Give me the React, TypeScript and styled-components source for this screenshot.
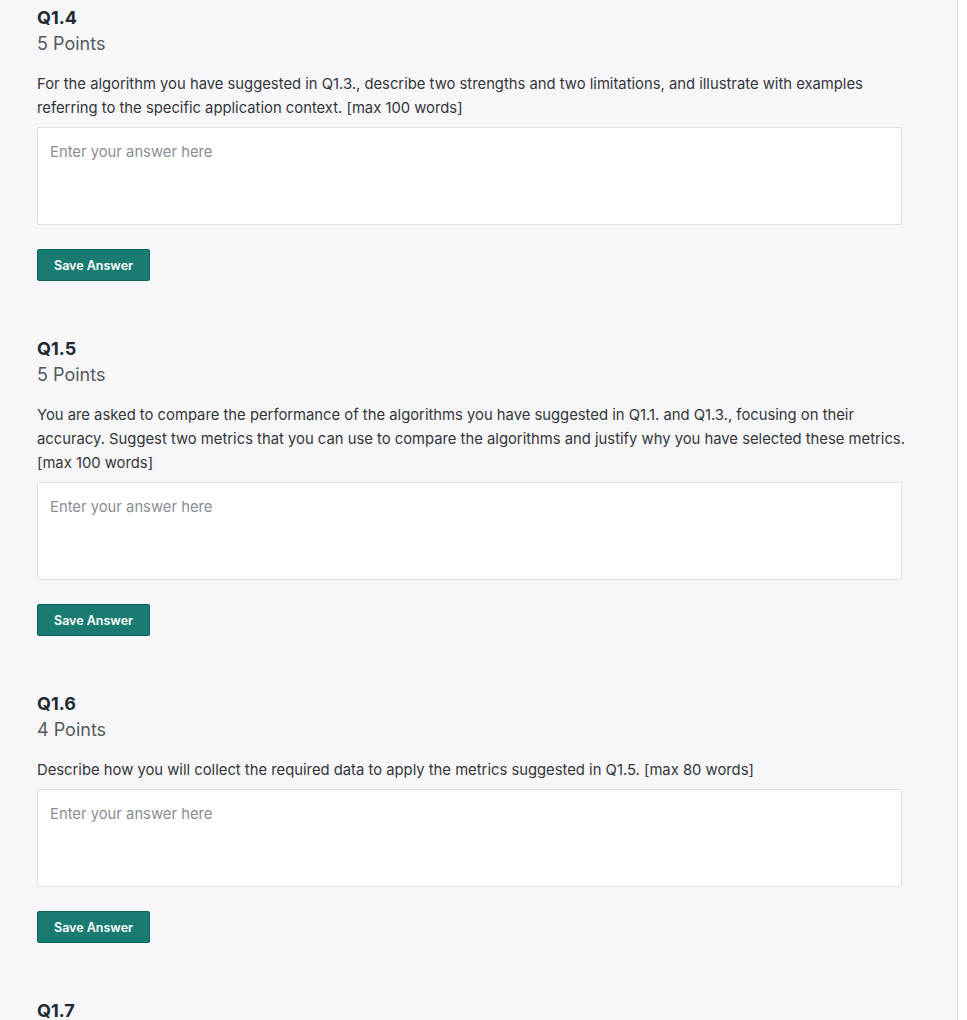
import React from "react";
import styled, { createGlobalStyle } from "styled-components";

const Global = createGlobalStyle`
  html, body { margin: 0; padding: 0; background: #ffffff; }
  body { font-family: "Inter", "Open Sans", sans-serif; }
`;

const Page = styled.div`
  width: 958px;
  min-height: 1020px;
  background: #f7f7f9;
  border-right: 1px solid #e2e2e8;
  box-sizing: border-box;
  padding: 7px 0 0 37px;
`;

const List = styled.div`
  width: 865px;
  display: flex;
  flex-direction: column;
  gap: 57px;
`;

const Question = styled.section`
  display: flex;
  flex-direction: column;
`;

const Title = styled.h3`
  margin: 0;
  font-size: 18px;
  line-height: 22px;
  font-weight: 700;
  color: #1f2a33;
`;

const Points = styled.div`
  margin-top: 4px;
  font-size: 18px;
  line-height: 22px;
  color: #545960;
`;

const Prompt = styled.p`
  margin: 17px -10px 0 0;
  font-size: 14.8px;
  line-height: 24px;
  color: #33353a;
`;

const Answer = styled.textarea`
  margin-top: 7px;
  height: 98px;
  box-sizing: border-box;
  width: 100%;
  resize: none;
  border: 1px solid #dedfe5;
  border-radius: 2px;
  background: #ffffff;
  padding: 12px;
  font-family: inherit;
  font-size: 14.8px;
  line-height: 24px;
  color: #33353a;
  &::placeholder { color: #8a8d94; }
`;

const SaveButton = styled.button`
  margin-top: 24px;
  align-self: flex-start;
  height: 32px;
  padding: 0 16px;
  background: #1a7b73;
  border: 1px solid #11615a;
  border-radius: 2px;
  color: #ffffff;
  font-family: inherit;
  font-size: 12.5px;
  font-weight: 600;
  cursor: pointer;
`;

const questions = [
  {
    id: "Q1.4",
    points: "5 Points",
    text: "For the algorithm you have suggested in Q1.3., describe two strengths and two limitations, and illustrate with examples referring to the specific application context. [max 100 words]",
  },
  {
    id: "Q1.5",
    points: "5 Points",
    text: "You are asked to compare the performance of the algorithms you have suggested in Q1.1. and Q1.3., focusing on their accuracy. Suggest two metrics that you can use to compare the algorithms and justify why you have selected these metrics. [max 100 words]",
  },
  {
    id: "Q1.6",
    points: "4 Points",
    text: "Describe how you will collect the required data to apply the metrics suggested in Q1.5. [max 80 words]",
  },
];

export default function App() {
  return (
    <>
      <Global />
      <Page>
        <List>
          {questions.map((q) => (
            <Question key={q.id}>
              <Title>{q.id}</Title>
              <Points>{q.points}</Points>
              <Prompt>{q.text}</Prompt>
              <Answer placeholder="Enter your answer here" />
              <SaveButton>Save Answer</SaveButton>
            </Question>
          ))}
          <Question>
            <Title>Q1.7</Title>
          </Question>
        </List>
      </Page>
    </>
  );
}
